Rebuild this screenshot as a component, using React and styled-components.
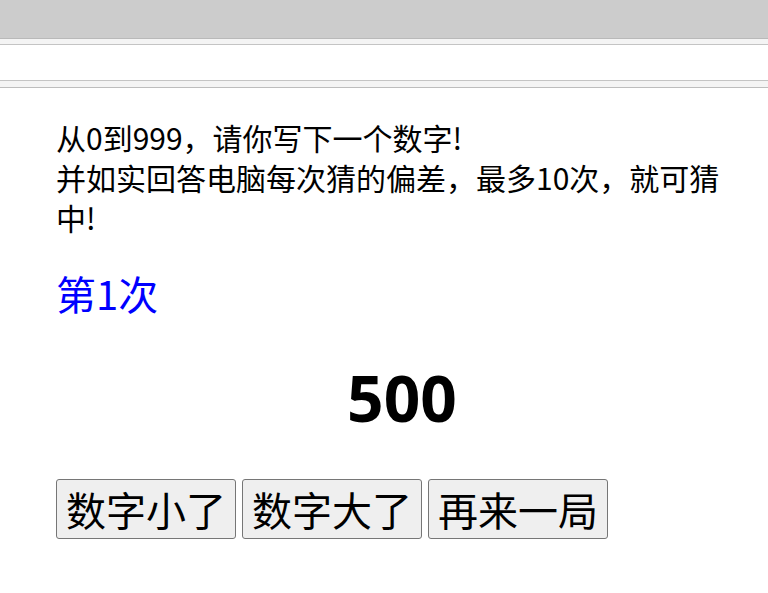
import React, { Component } from 'react';
import styled, { createGlobalStyle } from 'styled-components';

const GlobalStyle = createGlobalStyle`
   html, body {
      margin: 0;
      padding: 0;
      background: #ffffff;
   }

   body {
      font-family: "Noto Sans CJK SC", "Noto Sans", sans-serif;
      color: #000000;
   }
`;

const TopBar = styled.div`
   height: 38px;
   background: #cccccc;
   border-bottom: 1px solid #b9b9b9;
`;

const Strip = styled.div`
   background: #f4f4f4;
   padding: 5px 0 6px;
   border-bottom: 1px solid #bdbdbd;
`;

const AddressBar = styled.div`
   height: 35px;
   background: #ffffff;
   border-top: 1px solid #c4c4c4;
   border-bottom: 1px solid #c4c4c4;
`;

const Container = styled.div`
   padding: 29px 20px 40px 56px;
`;

const Intro = styled.p`
   margin: 0;
   font-size: 30px;
   line-height: 40px;
`;

const Round = styled.div`
   margin-top: 30px;
   font-size: 40px;
   line-height: 52px;
   color: #0000ff;
`;

const Guess = styled.div`
   margin-top: 39px;
   font-family: "Noto Sans", "Noto Sans CJK SC", sans-serif;
   font-weight: 700;
   font-size: 64px;
   line-height: 80px;
   text-align: center;
`;

const Actions = styled.div`
   display: flex;
   gap: 6px;
   margin-top: 41px;
`;

const Button = styled.button`
   width: 180px;
   padding: 2px 9px;
   font-family: "Noto Sans CJK SC", sans-serif;
   font-size: 40px;
   line-height: 54px;
   color: #000000;
   background: #efefef;
   border: 1px solid #767676;
   border-radius: 3px;
   white-space: nowrap;
   cursor: pointer;
`;

class App extends Component {
   state = {
      count: 1,
      guess: 500,
   };

   render() {
      const { count, guess } = this.state;

      return (
         <>
            <GlobalStyle />
            <TopBar />
            <Strip>
               <AddressBar />
            </Strip>
            <Container>
               <Intro>
                  从0到999，请你写下一个数字!
                  <br />
                  并如实回答电脑每次猜的偏差，最多10次，就可猜中!
               </Intro>
               <Round>第{count}次</Round>
               <Guess>{guess}</Guess>
               <Actions>
                  <Button>数字小了</Button>
                  <Button>数字大了</Button>
                  <Button>再来一局</Button>
               </Actions>
            </Container>
         </>
      );
   }
}

export default App;
